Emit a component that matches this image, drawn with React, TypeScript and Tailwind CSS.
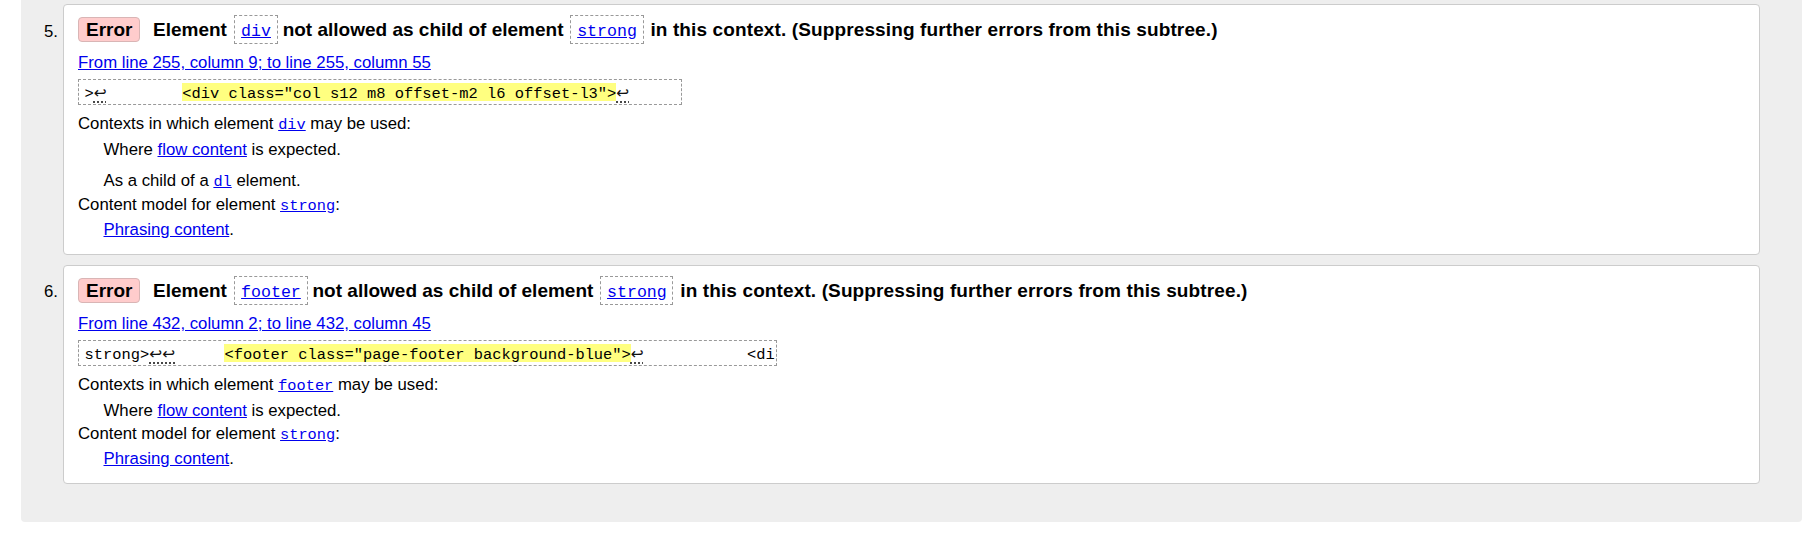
import React from "react";

function HCode({ children }: { children: React.ReactNode }) {
  return (
    <span className="h-[29px] border border-dashed border-[#999] px-[5.7px] pt-[8px] font-['Liberation_Mono',monospace] text-[16.6px] leading-none font-normal">
      <a className="text-[#0000ee] underline">{children}</a>
    </span>
  );
}

function BCode({ children }: { children: React.ReactNode }) {
  return (
    <a className="font-['Liberation_Mono',monospace] text-[15.3px] leading-none text-[#0000ee] underline">
      {children}
    </a>
  );
}

function Arrow({ n = 1 }: { n?: number }) {
  return n === 2 ? (
    <span className="inline-block w-[29px] leading-none font-['DejaVu_Sans',sans-serif] text-[15.4px] text-[#111] underline decoration-dotted underline-offset-[3px]">
      ↩↩
    </span>
  ) : (
    <span className="inline-block w-[14.5px] leading-none font-['DejaVu_Sans',sans-serif] text-[15.4px] text-[#111] underline decoration-dotted underline-offset-[3px]">
      ↩
    </span>
  );
}

function Mark({ children }: { children: React.ReactNode }) {
  return <span className="inline-block h-[17.4px] bg-[#ffff80]">{children}</span>;
}

function Heading({ el }: { el: string }) {
  return (
    <div className="flex items-baseline whitespace-nowrap text-[19px] leading-[19px] font-bold text-black">
      <span className="border border-[#d9b5b5] bg-[#ffcccc] rounded-[4px] px-[7px] py-[2px]">Error</span>
      <span className="ml-[12.5px]">Element</span>
      <span className="ml-[7.5px] flex">
        <HCode>{el}</HCode>
      </span>
      <span className="ml-[5px]">not allowed as child of element</span>
      <span className="ml-[7px] flex">
        <HCode>strong</HCode>
      </span>
      <span className="ml-[6.8px] tracking-[0.12px]">in this context. (Suppressing further errors from this subtree.)</span>
    </div>
  );
}

function Card({
  num,
  el,
  loc,
  extract,
  extractWidth,
  extraDd,
}: {
  num: string;
  el: string;
  loc: string;
  extract: React.ReactNode;
  extractWidth: "a" | "b";
  extraDd?: boolean;
}) {
  return (
    <li className="flex">
      <div className="w-[42px] shrink-0 pr-[5px] pt-[17.5px] text-right text-[16.75px] leading-[19px] text-black">
        {num}
      </div>
      <div className="flex-1 min-w-0 bg-white border border-[#cccccc] rounded-[4px] pl-[14px] pt-[10px] pb-[15.3px] text-[16.75px] text-black">
        <Heading el={el} />
        <div className="mt-[9px] h-[19px] leading-[19px]">
          <a className="text-[#0000ee] underline">{loc}</a>
        </div>
        <div
          className={
            extractWidth === "a"
              ? "mt-[7px] w-[604px] h-[26px] border border-dashed border-[#999] pl-[5.6px] pt-[3.3px] leading-[23.2px] whitespace-pre overflow-hidden font-['Liberation_Mono',monospace] text-[15.4px] text-black"
              : "mt-[7px] w-[699px] h-[26px] border border-dashed border-[#999] pl-[5.6px] pt-[3.3px] leading-[23.2px] whitespace-pre overflow-hidden font-['Liberation_Mono',monospace] text-[15.4px] text-black"
          }
        >
          {extract}
        </div>
        <div className="mt-[9px] h-[19px] leading-[19px]">
          Contexts in which element <BCode>{el}</BCode> may be used:
        </div>
        <div className="mt-[6.7px] h-[19px] leading-[19px] pl-[25.5px]">
          Where <a className="text-[#0000ee] underline">flow content</a> is expected.
        </div>
        {extraDd && (
          <div className="mt-[12.7px] h-[19px] leading-[19px] pl-[25.5px]">
            As a child of a <BCode>dl</BCode> element.
          </div>
        )}
        <div className="mt-[4.3px] h-[19px] leading-[19px]">
          Content model for element <BCode>strong</BCode>:
        </div>
        <div className="mt-[6px] h-[19px] leading-[19px] pl-[25.5px]">
          <a className="text-[#0000ee] underline">Phrasing content</a>.
        </div>
      </div>
    </li>
  );
}

export default function App() {
  return (
    <div className="w-[1810px] h-[541px] bg-white overflow-hidden font-['Liberation_Sans',Arial,sans-serif] text-black">
      <div className="ml-[21px] w-[1781px] h-[522px] bg-[#eeeeee] rounded-b-[4px] pt-[4px] pr-[42px]">
        <ol className="flex flex-col gap-[10px]">
          <Card
            num="5."
            el="div"
            loc="From line 255, column 9; to line 255, column 55"
            extractWidth="a"
            extraDd
            extract={
              <>
                {">"}
                <Arrow />
                {"        "}
                <Mark>{'<div class="col s12 m8 offset-m2 l6 offset-l3">'}</Mark>
                <Arrow />
                {"     "}
              </>
            }
          />
          <Card
            num="6."
            el="footer"
            loc="From line 432, column 2; to line 432, column 45"
            extractWidth="b"
            extract={
              <>
                {"strong>"}
                <Arrow n={2} />
                {"     "}
                <Mark>{'<footer class="page-footer background-blue">'}</Mark>
                <Arrow />
                {"           <di"}
              </>
            }
          />
        </ol>
      </div>
    </div>
  );
}
